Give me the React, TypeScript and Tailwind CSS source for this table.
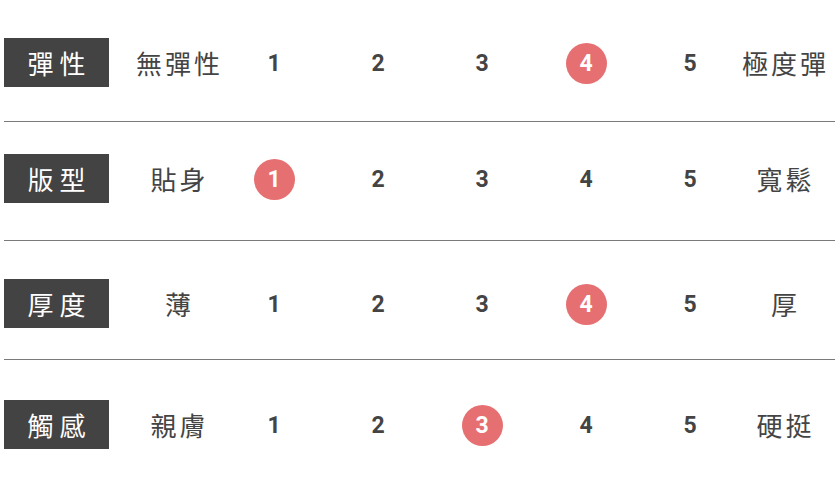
const rows = [
  { label: "彈性", low: "無彈性", high: "極度彈", value: 4, pad: "pt-[38px] pb-[34px] border-b" },
  { label: "版型", low: "貼身", high: "寬鬆", value: 1, pad: "pt-[32px] pb-[37px] border-b" },
  { label: "厚度", low: "薄", high: "厚", value: 4, pad: "pt-[38px] pb-[31px] border-b" },
  { label: "觸感", low: "親膚", high: "硬挺", value: 3, pad: "pt-[40px] pb-[40px]" },
];

const cjk = { fontFamily: '"Noto Sans CJK TC", "Noto Sans", sans-serif' };
const num = { fontFamily: 'Roboto, "Liberation Sans", sans-serif' };

export default function App() {
  return (
    <div className="w-[840px] h-[489px] bg-white pl-[4px] pr-[5px]">
      {rows.map((row) => (
        <div key={row.label} className={`flex items-center border-[#7a7a7a] ${row.pad}`}>
          <div
            className="w-[105px] h-[49px] bg-[#434343] text-white flex items-center justify-center text-[26px] leading-none"
            style={cjk}
          >
            <span className="tracking-[6px] -mr-[6px]">{row.label}</span>
          </div>
          <div className="ml-[25px] grid grid-cols-[88px_104px_104px_104px_104px_104px_84px] items-center">
            <div className="flex justify-center whitespace-nowrap text-[26px] leading-none text-[#444]" style={cjk}>
              <span className="tracking-[3px] -mr-[3px]">{row.low}</span>
            </div>
            {[1, 2, 3, 4, 5].map((n) => (
              <div key={n} className="flex justify-center pt-[2px]">
                {n === row.value ? (
                  <div
                    className="w-[41px] h-[41px] rounded-full bg-[#e66f71] text-white flex items-center justify-center text-[23px] font-bold leading-none"
                    style={num}
                  >
                    {n}
                  </div>
                ) : (
                  <div className="h-[41px] flex items-center text-[23px] font-bold leading-none text-[#444]" style={num}>
                    {n}
                  </div>
                )}
              </div>
            ))}
            <div className="flex justify-center whitespace-nowrap text-[26px] leading-none text-[#444]" style={cjk}>
              <span className="tracking-[3px] -mr-[3px]">{row.high}</span>
            </div>
          </div>
        </div>
      ))}
    </div>
  );
}
